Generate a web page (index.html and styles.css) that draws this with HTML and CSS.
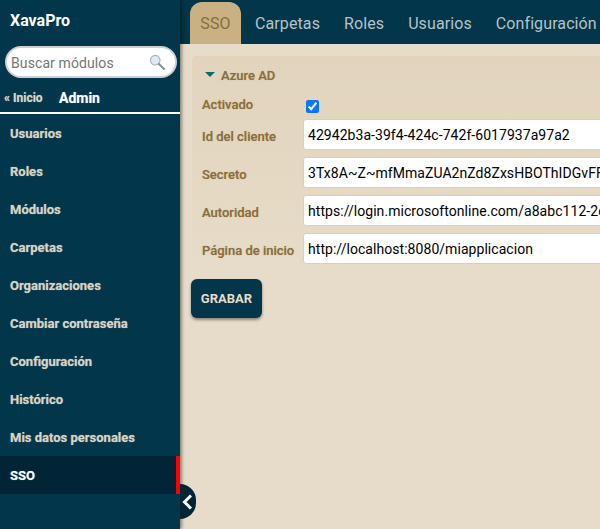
FILE: index.html
```html
<!DOCTYPE html>
<html lang="en">
<head>
  <meta charset="UTF-8">
  <title>XavaPro</title>
  <link rel="stylesheet" href="styles.css">
</head>
<body>

  <div class="app">
    <div class="sidebar">
      <div class="brand">XavaPro</div>
      <div class="search">
        <span class="search-text">Buscar módulos</span>
        <svg class="search-icon" width="16" height="16" viewBox="0 0 16 16">
          <circle cx="6.2" cy="6.2" r="4.8" fill="#dfeaf5" stroke="#a9b4bd" stroke-width="1.2"/>
          <path d="M10 10l5 5" stroke="#8a8f94" stroke-width="2" stroke-linecap="round"/>
        </svg>
      </div>
      <div class="folder-bar">
        <span class="home">« Inicio</span>
        <span class="folder">Admin</span>
      </div>
      <div class="menu">
        <div class="menu-item">Usuarios</div>
        <div class="menu-item">Roles</div>
        <div class="menu-item">Módulos</div>
        <div class="menu-item">Carpetas</div>
        <div class="menu-item">Organizaciones</div>
        <div class="menu-item">Cambiar contraseña</div>
        <div class="menu-item">Configuración</div>
        <div class="menu-item">Histórico</div>
        <div class="menu-item">Mis datos personales</div>
        <div class="menu-item selected">SSO</div>
      </div>
      <div class="collapse">
        <svg width="14" height="18" viewBox="0 0 14 18">
          <path d="M11 2.5L4.5 9l6.5 6.5" fill="none" stroke="#fff" stroke-width="3"/>
        </svg>
      </div>
    </div>

    <div class="main">
      <div class="tabs">
        <div class="tab active">SSO</div>
        <div class="tab">Carpetas</div>
        <div class="tab">Roles</div>
        <div class="tab">Usuarios</div>
        <div class="tab">Configuración</div>
      </div>

      <div class="content">
        <div class="frame">
          <div class="frame-title"><span class="arrow"></span>Azure AD</div>
          <div class="row check-row">
            <label class="field-label">Activado</label>
            <input class="check" type="checkbox" checked>
          </div>
          <div class="row">
            <label class="field-label">Id del cliente</label>
            <input class="editor" type="text" value="42942b3a-39f4-424c-742f-6017937a97a2">
          </div>
          <div class="row">
            <label class="field-label">Secreto</label>
            <input class="editor" type="text" value="3Tx8A~Z~mfMmaZUA2nZd8ZxsHBOThIDGvFFfkcWq">
          </div>
          <div class="row">
            <label class="field-label">Autoridad</label>
            <input class="editor" type="text" value="https://login.microsoftonline.com/a8abc112-2c4d-4e5f">
          </div>
          <div class="row">
            <label class="field-label">Página de inicio</label>
            <input class="editor" type="text" value="http://localhost:8080/miapplicacion">
          </div>
        </div>
        <button class="save" type="button">GRABAR</button>
      </div>
    </div>
  </div>

</body>
</html>
```

FILE: styles.css
```css
html, body {
  margin: 0;
  height: 100%;
  overflow: hidden;
}

body {
  font-family: Roboto, "Liberation Sans", sans-serif;
  background-color: #e7dcc9;
}

.app {
  display: flex;
  height: 529px;
  width: 600px;
  overflow: hidden;
}

/* left menu */
.sidebar {
  position: relative;
  flex: 0 0 180px;
  background-color: #02364b;
  box-shadow: 2px 0 3px rgba(0, 0, 0, 0.4);
  z-index: 1;
}

.brand {
  padding: 11px 0 0 10px;
  height: 35px;
  font-size: 16px;
  font-weight: 700;
  line-height: 20px;
  color: #fff;
}

.search {
  display: flex;
  align-items: center;
  justify-content: space-between;
  box-sizing: border-box;
  width: 172px;
  height: 32px;
  margin-left: 5px;
  padding: 2px 10px 0 4px;
  background-color: #fff;
  border: 2px solid #cfcfcf;
  border-radius: 16px;
}

.search-text {
  font-size: 14px;
  letter-spacing: 0.1px;
  color: #757575;
}

.search-icon {
  margin-top: -3px;
}

.folder-bar {
  display: flex;
  align-items: center;
  box-sizing: border-box;
  height: 36px;
  padding: 6px 0 0 4px;
  border-bottom: 2px solid #fff;
}

.home {
  width: 55px;
  font-size: 12px;
  font-weight: 700;
  color: #d9d3c3;
  text-shadow: 0 0 1px rgba(217, 211, 195, 0.6);
}

.folder {
  font-size: 14px;
  font-weight: 700;
  color: #fff;
  text-shadow: 0 0 1px rgba(255, 255, 255, 0.5);
}

.menu-item {
  box-sizing: border-box;
  height: 38px;
  padding-left: 10px;
  font-size: 13px;
  font-weight: 700;
  line-height: 39px;
  color: #d9d3c3;
  text-shadow: 0 0 1px rgba(217, 211, 195, 0.6);
}

.menu-item.selected {
  background-color: #012536;
  border-right: 4px solid #ff0000;
  color: #fff;
  text-shadow: 0 0 1px rgba(255, 255, 255, 0.5);
}

.collapse {
  position: absolute;
  left: 180px;
  top: 484px;
  display: flex;
  align-items: center;
  width: 16px;
  height: 35px;
  background-color: #012536;
  border-radius: 0 18px 18px 0;
}

/* tabs */
.main {
  flex: 1;
  min-width: 0;
}

.tabs {
  display: flex;
  height: 44px;
  padding: 2px 0 0 10px;
  box-sizing: border-box;
  background-color: #02364b;
}

.tab {
  flex: none;
  padding: 0 12px;
  font-size: 16px;
  line-height: 43px;
  letter-spacing: 0.1px;
  color: #b6c3c7;
  white-space: nowrap;
}

.tab.active {
  width: 51px;
  margin-right: 2px;
  box-sizing: border-box;
  padding: 0;
  text-align: center;
  background-color: #c9b183;
  border-radius: 12px 12px 0 0;
  color: #8a6d3b;
}

/* form */
.content {
  padding: 12px 0 0 12px;
}

.frame {
  width: 408px;
  height: 214px;
  box-sizing: border-box;
  padding: 8px 0 0 10px;
  background: linear-gradient(#e2d4bc, #e7dcc9);
  border-radius: 4px 0 0 4px;
}

.frame-title {
  display: flex;
  align-items: center;
  height: 22px;
  font-size: 13px;
  font-weight: 500;
  color: #8a6d3b;
  text-shadow: 0 0 1px rgba(138, 109, 59, 0.5);
}

.arrow {
  width: 0;
  height: 0;
  margin: -2px 6px 0 3px;
  border-left: 5.5px solid transparent;
  border-right: 5.5px solid transparent;
  border-top: 5px solid #0b6a6a;
}

.row {
  display: flex;
  align-items: center;
  height: 38px;
}

.check-row {
  height: 21px;
  margin-top: 5px;
  margin-bottom: 3px;
}

.check-row .field-label {
  padding-top: 6px;
}

.field-label {
  flex: 0 0 101px;
  padding-top: 4px;
  font-size: 13px;
  font-weight: 500;
  color: #8a6d3b;
  text-shadow: 0 0 1px rgba(138, 109, 59, 0.5);
}

.check {
  width: 13px;
  height: 13px;
  margin: 9px 0 0 3px;
  accent-color: #0a75ff;
}

.editor {
  box-sizing: border-box;
  flex: none;
  width: 330px;
  height: 31px;
  margin: 0;
  padding: 1px 4px 0;
  background-color: #fff;
  border: 1px solid #d0d0d0;
  border-radius: 3px;
  outline: none;
  font-family: inherit;
  font-size: 14px;
  letter-spacing: 0.05px;
  color: #000;
}

.save {
  display: block;
  width: 71px;
  height: 39px;
  margin: 9px 0 0 -1px;
  padding: 0;
  background-color: #02364b;
  border: none;
  border-radius: 6px;
  box-shadow: 0 2px 3px rgba(0, 0, 0, 0.4);
  font-family: inherit;
  font-size: 13px;
  font-weight: 700;
  color: #e7dcc9;
}
```
